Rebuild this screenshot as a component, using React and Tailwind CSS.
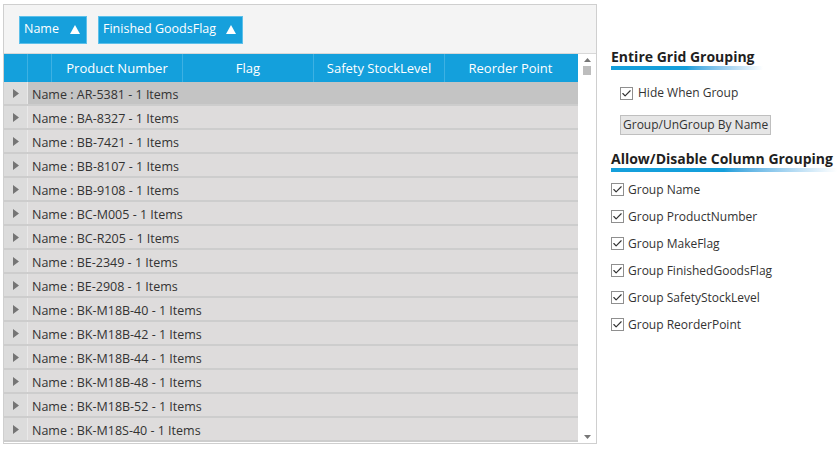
import { Check } from 'lucide-react'

const rows = [
  'AR-5381', 'BA-8327', 'BB-7421', 'BB-8107', 'BB-9108', 'BC-M005', 'BC-R205',
  'BE-2349', 'BE-2908', 'BK-M18B-40', 'BK-M18B-42', 'BK-M18B-44', 'BK-M18B-48',
  'BK-M18B-52', 'BK-M18S-40',
]

const groupOpts = ['Group Name', 'Group ProductNumber', 'Group MakeFlag', 'Group FinishedGoodsFlag', 'Group SafetyStockLevel', 'Group ReorderPoint']

function Box() {
  return (
    <span className="w-[13px] h-[13px] border border-[#8f8f8f] bg-white flex items-center justify-center shrink-0">
      <Check size={11} strokeWidth={2.5} className="text-[#333]" />
    </span>
  )
}

function GroupChip({ label, w }) {
  return (
    <div className={`h-[28px] ${w} bg-[#16a0dc] border border-[#5cc0ea] text-white text-[12.5px] flex items-center justify-between pl-[4px] pr-[6px]`}>
      <span>{label}</span>
      <svg width="10" height="9" viewBox="0 0 10 9"><path d="M0 9 L5 0 L10 9 Z" fill="white" /></svg>
    </div>
  )
}

function Heading({ text, bar }) {
  return (
    <div>
      <p className="font-bold text-[14px] text-[#1f1f1f] leading-[18px]">{text}</p>
      <div className={`h-[4px] ${bar} bg-gradient-to-r from-[#149fdb] via-[#149fdb] to-white`} />
    </div>
  )
}

export default function App() {
  return (
    <div className="w-[840px] h-[450px] bg-white flex text-[#333]" style={{ fontFamily: '"Segoe UI", "Open Sans", sans-serif' }}>
      {/* grid */}
      <div className="ml-[3px] mt-[4px] w-[594px] h-[440px] border border-[#cfcfcf] flex flex-col">
        <div className="h-[49px] bg-[#f4f4f4] border-b border-[#d8d8d8] flex items-center gap-[11px] pl-[15px] pt-[1px]">
          <GroupChip label="Name" w="w-[68px]" />
          <GroupChip label="Finished GoodsFlag" w="w-[145px]" />
        </div>
        <div className="flex flex-1 min-h-0">
          <div className="flex-1 flex flex-col">
            <div className="h-[28px] bg-[#14a0dc] flex text-white text-[13px] shrink-0">
              <div className="w-[24px] border-r border-[#3db1e3]" />
              <div className="w-[24px] border-r border-[#3db1e3]" />
              {['Product Number', 'Flag', 'Safety StockLevel', 'Reorder Point'].map((h, i) => (
                <div key={h} className={`w-[131px] flex items-center justify-center pt-[2px] ${i < 3 ? 'border-r border-[#3db1e3]' : ''}`}>{h}</div>
              ))}
            </div>
            {rows.map((r, i) => (
              <div key={r} className="h-[24px] flex shrink-0 border-b-2 border-[#cdcdcd]">
                <div className="w-[24px] bg-[#dcdcdc] border-r border-[#e9e9e9] flex items-center justify-center pt-[1px]">
                  <svg width="6" height="9" viewBox="0 0 6 9"><path d="M0 0 L6 4.5 L0 9 Z" fill="#757575" /></svg>
                </div>
                <div className={`flex-1 flex items-center pl-[4px] pt-[4px] text-[12.5px] ${i === 0 ? 'bg-[#c4c4c4]' : 'bg-[#dedcdc]'}`}>
                  Name : {r} - 1 Items
                </div>
              </div>
            ))}
          </div>
          <div className="w-[18px] flex flex-col items-center justify-between pt-[4px] pb-[4px]">
            <div className="flex flex-col items-center gap-[4px]">
              <svg width="7" height="4" viewBox="0 0 7 4"><path d="M0 4 L3.5 0 L7 4 Z" fill="#777" /></svg>
              <div className="w-[8px] h-[9px] bg-[#bdbdbd]" />
            </div>
            <svg width="7" height="4" viewBox="0 0 7 4"><path d="M0 0 L3.5 4 L7 0 Z" fill="#777" /></svg>
          </div>
        </div>
      </div>

      {/* options */}
      <div className="ml-[14px] mt-[48px] flex flex-col w-[226px]">
        <Heading text="Entire Grid Grouping" bar="w-[152px]" />
        <label className="flex items-center gap-[5px] ml-[9px] mt-[14px] text-[12px]">
          <Box />Hide When Group
        </label>
        <button className="self-start ml-[9px] mt-[13px] h-[20px] px-[2px] bg-[#e6e6e6] border border-[#bfbfbf] text-[12px] text-[#333] leading-none">
          Group/UnGroup By Name
        </button>
        <div className="mt-[15px]">
          <Heading text="Allow/Disable Column Grouping" bar="w-[226px]" />
        </div>
        <div className="flex flex-col gap-[10px] mt-[9px]">
          {groupOpts.map(g => (
            <label key={g} className="flex items-center gap-[4px] h-[17px] text-[12px]">
              <Box />{g}
            </label>
          ))}
        </div>
      </div>
    </div>
  )
}
